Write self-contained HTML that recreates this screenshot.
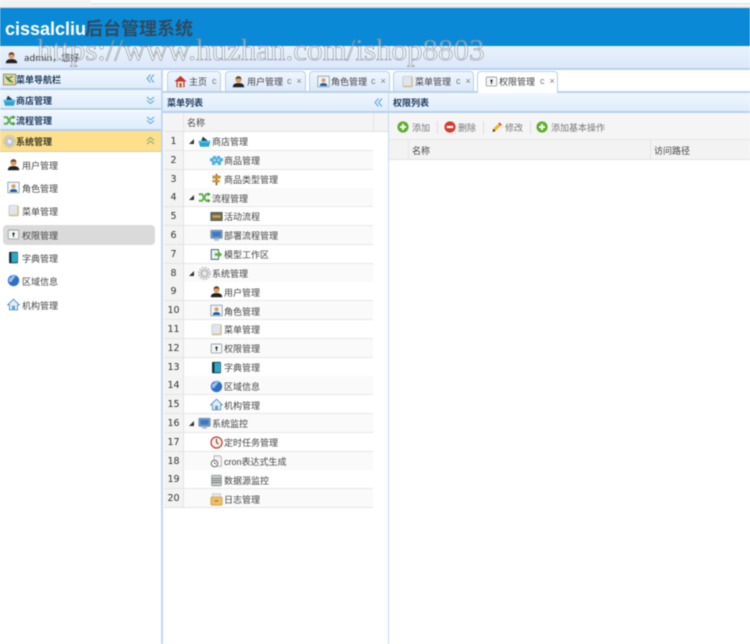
<!DOCTYPE html>
<html lang="zh"><head><meta charset="utf-8"><title>后台管理系统</title>
<style>
*{box-sizing:border-box}
html,body{margin:0;padding:0;background:#fff}
body{width:750px;height:644px;overflow:hidden;position:relative;font-family:"Liberation Sans","Noto Sans CJK SC",sans-serif;font-size:9px;color:#444}
#w{position:absolute;left:0;top:0;width:750px;height:644px;overflow:hidden;filter:blur(.4px)}
.a,.t,.i{position:absolute}
.t{white-space:nowrap;line-height:14px;height:14px;margin-top:2px}
.n+svg+.t,.n+.tri+svg+.t{margin-top:1px}
.b{font-weight:bold;color:#1f3b5c}
.i{width:13px;height:13px}
.hd{position:absolute;background:linear-gradient(#eff6fe,#dfecfb);border-bottom:2px solid #b8d0ec}
.r{position:absolute;left:164px;width:209px;height:19px;border-bottom:1px solid #e6e6e6}
.n{position:absolute;left:164px;width:20px;height:19px;background:#f3f3f3;border-right:1px solid #e2e2e2;border-bottom:1px solid #e4e4e4;text-align:center;font-family:"DejaVu Sans",sans-serif;font-size:9.5px;line-height:20px;color:#333}
.tab{position:absolute;top:71px;height:20px;border:1px solid #b7d0ea;border-bottom:0;border-radius:4px 4px 0 0;background:linear-gradient(#eff6fe,#dbe9f9)}
.c{position:absolute;font-size:9px;color:#777;line-height:14px;white-space:pre}
.ch{position:absolute;width:9px;height:9px}
.tri{position:absolute;width:0;height:0;border-left:5px solid transparent;border-bottom:5px solid #333}
</style></head><body>
<svg width="0" height="0" style="position:absolute"><defs>
<symbol id="dl" viewBox="0 0 9 9"><path d="M4.500 .5L1 4.500 4.500 8.500M8 .5L4.500 4.500 8 8.500" fill="none" stroke="#5aa3da" stroke-width="1"/></symbol>
<symbol id="dd" viewBox="0 0 9 9"><path d="M1 1l3.500 3L8 1M1 4.500l3.500 3 3.500-3" fill="none" stroke="#5aa3da" stroke-width="1"/></symbol>
<symbol id="du" viewBox="0 0 9 9"><path d="M1 4.500l3.500-3 3.500 3M1 8l3.500-3L8 8" fill="none" stroke="#7fa67a" stroke-width="1"/></symbol>
<symbol id="user" viewBox="0 0 16 16"><path d="M1 15c0-4 3-5 7-5s7 1 7 5z" fill="#222"/><circle cx="8" cy="6" r="3.700" fill="#d9a066"/><path d="M4.300 5.500C4.500 2.500 6 1.500 8 1.500s3.500 1 3.700 4C10 4 6 4 4.300 5.500z" fill="#6b4420"/></symbol>
<symbol id="role" viewBox="0 0 16 16"><rect x="1" y="1.500" width="14" height="13" fill="#f2f5f8" stroke="#8a9aa8"/><circle cx="8" cy="6.500" r="2.500" fill="#d9a066"/><path d="M3.500 13.500c0-3 2-3.500 4.500-3.500s4.500.5 4.500 3.500z" fill="#1c5ba8"/></symbol>
<symbol id="menu" viewBox="0 0 16 16"><rect x="2" y="1.500" width="12.500" height="13.500" rx="1.500" fill="#d9b878"/><rect x="2.500" y="1.500" width="10.500" height="12" rx="1" fill="#dfe5ea" stroke="#b9c2ca" stroke-width=".6"/></symbol>
<symbol id="perm" viewBox="0 0 16 16"><rect x="1.500" y="2.500" width="13" height="11" rx="1" fill="#f4f6f6" stroke="#8d9aa0"/><circle cx="8" cy="7" r="1.400" fill="#222"/><rect x="7.400" y="7" width="1.200" height="4" fill="#222"/></symbol>
<symbol id="dict" viewBox="0 0 16 16"><rect x="2.500" y="1" width="11" height="14" rx="1" fill="#1b2f3a"/><rect x="5.500" y="2" width="7.500" height="12" fill="#2ea7c9"/></symbol>
<symbol id="globe" viewBox="0 0 16 16"><circle cx="8" cy="8" r="7" fill="#2f6fc9"/><path d="M3 5c2-1 4-3 6-2 1 2-1 3-2 4s-1 3-3 3-2-3-1-5z" fill="#9cc3ea"/><path d="M4 2.500c3-1.500 6-1 8 1-3-1-5-1-8-1z" fill="#cfe4fa"/></symbol>
<symbol id="home" viewBox="0 0 16 16"><path d="M8 1.500L.8 8.500h2.200v6h10v-6h2.200z" fill="#e4eef6" stroke="#4e8fc4" stroke-width="1.100"/><rect x="6.200" y="9.500" width="3.600" height="5" fill="#5f9ed0"/></symbol>
<symbol id="homer" viewBox="0 0 16 16"><path d="M8 1L.5 8h2.500v7h10V8h2.500z" fill="#c9342a"/><rect x="4.500" y="8" width="7" height="7" fill="#f1e5cf"/><rect x="6.800" y="10" width="2.500" height="5" fill="#9a5a2e"/></symbol>
<symbol id="shop" viewBox="0 0 16 16"><path d="M1 8.500h14l-1.500 6h-11z" fill="#2aa3d6"/><rect x="0.500" y="7" width="15" height="2.500" rx="1" fill="#49bde8"/><path d="M4 7l2-5 6 5z" fill="#1f3b4c"/></symbol>
<symbol id="flow" viewBox="0 0 16 16"><path d="M1 4h4l5 8h3M1 12h4l5-8h3" fill="none" stroke="#5eb04f" stroke-width="2.400"/><path d="M12 1.500l3.500 2.500-3.500 2.500zM12 9.500l3.500 2.500-3.500 2.500z" fill="#3f8f36"/></symbol>
<symbol id="gear" viewBox="0 0 16 16"><circle cx="8" cy="8" r="7" fill="none" stroke="#b9bdc0" stroke-width="2" stroke-dasharray="2.200 1.500"/><circle cx="8" cy="8" r="5.600" fill="#bfc3c6"/><circle cx="8" cy="8" r="2.600" fill="#eceeef"/></symbol>
<symbol id="nav" viewBox="0 0 16 16"><rect x=".5" y="1.500" width="15" height="13" fill="#e8d9a0" stroke="#7d7d5a"/><path d="M3 4l9 8M12 4l-7 3 4 4" fill="none" stroke="#3c8a3f" stroke-width="1.500"/></symbol>
<symbol id="puzzle" viewBox="0 0 16 16"><path d="M0 5h3.500V2.500h4V5h1V2.500h4V5H16v4h-2.500v4.500h-4V11h-3v2.500h-4V9H0z" fill="#4bb0e0"/><circle cx="5.500" cy="7.500" r="1.200" fill="#dff1fb"/><circle cx="10.500" cy="7.500" r="1.200" fill="#dff1fb"/></symbol>
<symbol id="sign" viewBox="0 0 16 16"><rect x="7" y="1" width="2" height="14" fill="#8a5a1f"/><path d="M3 3h9l2 2-2 2H3zM4 8.500h8v3H4l-2-1.500z" fill="#c8963c"/></symbol>
<symbol id="act" viewBox="0 0 16 16"><rect x="1" y="3" width="14" height="10" fill="#6f6a55" stroke="#555"/><rect x="3" y="6.500" width="10" height="3" fill="#c8a93e"/></symbol>
<symbol id="mon" viewBox="0 0 16 16"><rect x="1" y="1.500" width="14" height="10" rx="1" fill="#6f9bd2" stroke="#7c8ea4"/><rect x="3" y="3.500" width="10" height="6" fill="#3f78c0"/><rect x="5" y="12" width="6" height="2.500" fill="#b7bdc4"/></symbol>
<symbol id="model" viewBox="0 0 16 16"><rect x="1.500" y="2" width="9" height="12" fill="#e8f0f4" stroke="#2a4a62"/><path d="M6 6.500h4V3.500l5 4.500-5 4.500v-3H6z" fill="#5cae3c"/></symbol>
<symbol id="clock" viewBox="0 0 16 16"><circle cx="8" cy="8" r="6.800" fill="#f7f3ea" stroke="#c23a2c" stroke-width="1.500"/><path d="M8 3.500V8l2.500 2" fill="none" stroke="#8a2a20" stroke-width="1.300"/></symbol>
<symbol id="cron" viewBox="0 0 16 16"><path d="M5 1h7l2 2v11H5z" fill="#f2f2f2" stroke="#a8a8a8"/><circle cx="5.500" cy="10.500" r="4" fill="#fff" stroke="#666" stroke-width="1.200"/><path d="M5.500 8.500v2h2" fill="none" stroke="#666"/></symbol>
<symbol id="db" viewBox="0 0 16 16"><rect x="2" y="1.500" width="12" height="13" rx="1.500" fill="#c4cac8" stroke="#8f9795"/><path d="M2 5.500h12M2 8h12M2 10.500h12" stroke="#6f7775"/></symbol>
<symbol id="log" viewBox="0 0 16 16"><rect x="3" y="1" width="10" height="6" fill="#e6e9ec" stroke="#aaa" stroke-width=".6"/><rect x="1" y="5" width="14" height="10" rx="1.500" fill="#efbd62" stroke="#c69436" stroke-width=".7"/><rect x="6" y="9" width="4" height="1.300" fill="#8a6a2a"/></symbol>
<symbol id="plus" viewBox="0 0 12 12"><circle cx="6" cy="6" r="5.600" fill="#5fae2c"/><path d="M6 3v6M3 6h6" stroke="#fff" stroke-width="2"/></symbol>
<symbol id="minus" viewBox="0 0 12 12"><circle cx="6" cy="6" r="5.600" fill="#d63b2f"/><path d="M2.800 6h6.400" stroke="#fff" stroke-width="2.200"/></symbol>
<symbol id="pen" viewBox="0 0 12 12"><path d="M1.500 11l.8-3.200L8.500 1.500l2.200 2.200-6.300 6.300z" fill="#f2b32e"/><path d="M7.500 2.500l2.200 2.200 1-1-2.200-2.200z" fill="#c9342a"/><path d="M1.500 11l.8-3.200 2.200 2.200z" fill="#333"/></symbol>
</defs></svg>
<div id="w">
<!-- browser strip -->
<div class="a" style="left:0;top:0;width:750px;height:8px;background:#f2f2f2;border-bottom:1px solid #d8d8d8"></div>
<div class="a" style="left:91px;top:0;width:660px;height:4px;background:#fff;border-bottom:1px solid #ddd"></div>
<!-- header -->
<div class="a" style="left:0;top:8px;width:750px;height:38px;background:#0a8ad6"></div>
<div class="a" style="left:0;top:46px;width:750px;height:22px;background:linear-gradient(#e9f2fd,#dbe8f9)"></div>
<div class="a" style="left:0;top:68px;width:750px;height:2px;background:#b9d2ee"></div>
<div class="t" style="left:5px;top:17px;margin-top:0;height:24px;line-height:24px;font-size:18px;font-weight:bold;color:#fff">cissalcliu</div>
<div class="t" style="left:85px;top:17px;margin-top:0;height:24px;line-height:24px;font-size:18px;font-weight:bold;color:#2f4b63">后台管理系统</div>
<svg class="i" style="left:5px;top:51px"><use href="#user"/></svg>
<div class="t" style="left:24px;top:50px;font-family:'DejaVu Sans','Noto Sans CJK SC',sans-serif;font-size:9px;color:#333">admin，您好</div>
<div class="t" style="left:37px;top:34px;margin-top:0;height:32px;line-height:32px;font-family:'Liberation Serif',serif;font-size:31px;color:rgba(255,255,255,.35);-webkit-text-stroke:.6px rgba(120,120,120,.8)">https://www.huzhan.com/ishop8803</div>

<!-- left accordion -->
<div class="hd" style="left:0;top:70px;width:161px;height:20px"></div>
<svg class="i" style="left:3px;top:73px"><use href="#nav"/></svg>
<div class="t b" style="left:16px;top:71px">菜单导航栏</div>
<svg class="ch" style="left:146px;top:74px"><use href="#dl"/></svg>
<div class="hd" style="left:0;top:90px;width:161px;height:20px"></div>
<svg class="i" style="left:3px;top:94px"><use href="#shop"/></svg>
<div class="t b" style="left:16px;top:92px">商店管理</div>
<svg class="ch" style="left:146px;top:96px"><use href="#dd"/></svg>
<div class="hd" style="left:0;top:111px;width:161px;height:20px"></div>
<svg class="i" style="left:3px;top:114px"><use href="#flow"/></svg>
<div class="t b" style="left:16px;top:112px">流程管理</div>
<svg class="ch" style="left:146px;top:116px"><use href="#dd"/></svg>
<div class="a" style="left:0;top:131px;width:161px;height:21px;background:#fddf8c;border-bottom:1px solid #c9d2b8"></div>
<svg class="i" style="left:3px;top:135px"><use href="#gear"/></svg>
<div class="t b" style="left:16px;top:133px;color:#3a3a2a">系统管理</div>
<svg class="ch" style="left:146px;top:136px"><use href="#du"/></svg>

<div class="a" style="left:3px;top:225px;width:152px;height:20px;background:#dadada;border-radius:4px"></div>
<svg class="i" style="left:7px;top:158px"><use href="#user"/></svg><div class="t" style="left:22px;top:157px">用户管理</div>
<svg class="i" style="left:7px;top:181px"><use href="#role"/></svg><div class="t" style="left:22px;top:180px">角色管理</div>
<svg class="i" style="left:7px;top:204px"><use href="#menu"/></svg><div class="t" style="left:22px;top:203px">菜单管理</div>
<svg class="i" style="left:7px;top:228px"><use href="#perm"/></svg><div class="t" style="left:22px;top:227px">权限管理</div>
<svg class="i" style="left:7px;top:251px"><use href="#dict"/></svg><div class="t" style="left:22px;top:250px">字典管理</div>
<svg class="i" style="left:7px;top:274px"><use href="#globe"/></svg><div class="t" style="left:22px;top:273px">区域信息</div>
<svg class="i" style="left:7px;top:298px"><use href="#home"/></svg><div class="t" style="left:22px;top:297px">机构管理</div>

<div class="a" style="left:161px;top:68px;width:2px;height:576px;background:#c2d8f0"></div>

<!-- tabs -->
<div class="a" style="left:163px;top:91px;width:587px;height:2px;background:#b9d2ee"></div>
<div class="tab" style="left:167px;width:54px"></div>
<svg class="i" style="left:174px;top:75px"><use href="#homer"/></svg><div class="t" style="left:189px;top:73px">主页</div><div class="c" style="left:212px;top:74px">c</div>
<div class="tab" style="left:225px;width:81px"></div>
<svg class="i" style="left:232px;top:75px"><use href="#user"/></svg><div class="t" style="left:247px;top:73px">用户管理</div><div class="c" style="left:287px;top:74px">c  ×</div>
<div class="tab" style="left:309px;width:81px"></div>
<svg class="i" style="left:317px;top:75px"><use href="#role"/></svg><div class="t" style="left:331px;top:73px">角色管理</div><div class="c" style="left:371px;top:74px">c  ×</div>
<div class="tab" style="left:393px;width:81px"></div>
<svg class="i" style="left:401px;top:75px"><use href="#menu"/></svg><div class="t" style="left:415px;top:73px">菜单管理</div><div class="c" style="left:456px;top:74px">c  ×</div>
<div class="tab" style="left:477px;width:81px;height:23px;background:#fff"></div>
<svg class="i" style="left:485px;top:75px"><use href="#perm"/></svg><div class="t" style="left:499px;top:73px">权限管理</div><div class="c" style="left:540px;top:74px">c  ×</div>

<!-- panel headers -->
<div class="hd" style="left:163px;top:93px;width:225px;height:20px"></div>
<div class="t b" style="left:167px;top:94px">菜单列表</div>
<svg class="ch" style="left:374px;top:98px"><use href="#dl"/></svg>
<div class="hd" style="left:389px;top:93px;width:361px;height:20px"></div>
<div class="t b" style="left:393px;top:94px">权限列表</div>
<div class="a" style="left:388px;top:93px;width:1px;height:551px;background:#c7daf0"></div>

<!-- left grid header -->
<div class="a" style="left:164px;top:113px;width:224px;height:19px;background:#f4f4f4;border-bottom:1px solid #e2e2e2"></div>
<div class="a" style="left:183px;top:113px;width:1px;height:19px;background:#e4e4e4"></div>
<div class="a" style="left:373px;top:113px;width:1px;height:19px;background:#e4e4e4"></div>
<div class="t" style="left:187px;top:114px">名称</div>

<!-- rows -->
<div class="r" style="top:132px;background:#fff"></div><div class="n" style="top:132px">1</div><div class="tri" style="left:189px;top:139px"></div><svg class="i" style="left:198px;top:135px"><use href="#shop"/></svg><div class="t" style="left:212px;top:134px">商店管理</div>
<div class="r" style="top:151px;background:#fafafa"></div><div class="n" style="top:151px">2</div><svg class="i" style="left:210px;top:154px"><use href="#puzzle"/></svg><div class="t" style="left:224px;top:153px">商品管理</div>
<div class="r" style="top:170px;background:#fff"></div><div class="n" style="top:170px">3</div><svg class="i" style="left:210px;top:173px"><use href="#sign"/></svg><div class="t" style="left:224px;top:172px">商品类型管理</div>
<div class="r" style="top:188px;background:#fafafa"></div><div class="n" style="top:188px">4</div><div class="tri" style="left:189px;top:195px"></div><svg class="i" style="left:198px;top:191px"><use href="#flow"/></svg><div class="t" style="left:212px;top:191px">流程管理</div>
<div class="r" style="top:207px;background:#fff"></div><div class="n" style="top:207px">5</div><svg class="i" style="left:210px;top:210px"><use href="#act"/></svg><div class="t" style="left:224px;top:209px">活动流程</div>
<div class="r" style="top:226px;background:#fafafa"></div><div class="n" style="top:226px">6</div><svg class="i" style="left:210px;top:229px"><use href="#mon"/></svg><div class="t" style="left:224px;top:228px">部署流程管理</div>
<div class="r" style="top:245px;background:#fff"></div><div class="n" style="top:245px">7</div><svg class="i" style="left:210px;top:248px"><use href="#model"/></svg><div class="t" style="left:224px;top:247px">模型工作区</div>
<div class="r" style="top:264px;background:#fafafa"></div><div class="n" style="top:264px">8</div><div class="tri" style="left:189px;top:271px"></div><svg class="i" style="left:198px;top:267px"><use href="#gear"/></svg><div class="t" style="left:212px;top:266px">系统管理</div>
<div class="r" style="top:282px;background:#fff"></div><div class="n" style="top:282px">9</div><svg class="i" style="left:210px;top:285px"><use href="#user"/></svg><div class="t" style="left:224px;top:285px">用户管理</div>
<div class="r" style="top:301px;background:#fafafa"></div><div class="n" style="top:301px">10</div><svg class="i" style="left:210px;top:304px"><use href="#role"/></svg><div class="t" style="left:224px;top:304px">角色管理</div>
<div class="r" style="top:320px;background:#fff"></div><div class="n" style="top:320px">11</div><svg class="i" style="left:210px;top:323px"><use href="#menu"/></svg><div class="t" style="left:224px;top:322px">菜单管理</div>
<div class="r" style="top:339px;background:#fafafa"></div><div class="n" style="top:339px">12</div><svg class="i" style="left:210px;top:342px"><use href="#perm"/></svg><div class="t" style="left:224px;top:341px">权限管理</div>
<div class="r" style="top:358px;background:#fff"></div><div class="n" style="top:358px">13</div><svg class="i" style="left:210px;top:361px"><use href="#dict"/></svg><div class="t" style="left:224px;top:360px">字典管理</div>
<div class="r" style="top:376px;background:#fafafa"></div><div class="n" style="top:376px">14</div><svg class="i" style="left:210px;top:380px"><use href="#globe"/></svg><div class="t" style="left:224px;top:379px">区域信息</div>
<div class="r" style="top:395px;background:#fff"></div><div class="n" style="top:395px">15</div><svg class="i" style="left:210px;top:398px"><use href="#home"/></svg><div class="t" style="left:224px;top:398px">机构管理</div>
<div class="r" style="top:414px;background:#fafafa"></div><div class="n" style="top:414px">16</div><div class="tri" style="left:189px;top:421px"></div><svg class="i" style="left:198px;top:417px"><use href="#mon"/></svg><div class="t" style="left:212px;top:416px">系统监控</div>
<div class="r" style="top:433px;background:#fff"></div><div class="n" style="top:433px">17</div><svg class="i" style="left:210px;top:436px"><use href="#clock"/></svg><div class="t" style="left:224px;top:435px">定时任务管理</div>
<div class="r" style="top:452px;background:#fafafa"></div><div class="n" style="top:452px">18</div><svg class="i" style="left:210px;top:455px"><use href="#cron"/></svg><div class="t" style="left:224px;top:454px">cron表达式生成</div>
<div class="r" style="top:470px;background:#fff"></div><div class="n" style="top:470px">19</div><svg class="i" style="left:210px;top:474px"><use href="#db"/></svg><div class="t" style="left:224px;top:473px">数据源监控</div>
<div class="r" style="top:489px;background:#fafafa;height:19px"></div><div class="n" style="top:489px">20</div><svg class="i" style="left:210px;top:493px"><use href="#log"/></svg><div class="t" style="left:224px;top:492px">日志管理</div>

<!-- toolbar -->
<div class="a" style="left:389px;top:113px;width:361px;height:27px;background:#f5f5f5;border-bottom:1px solid #e6e6e6"></div>
<svg class="a" style="left:397px;top:121px;width:12px;height:12px"><use href="#plus"/></svg><div class="t" style="left:412px;top:119px;color:#777">添加</div>
<div class="a" style="left:437px;top:121px;width:1px;height:13px;background:#ddd"></div>
<svg class="a" style="left:444px;top:121px;width:12px;height:12px"><use href="#minus"/></svg><div class="t" style="left:458px;top:119px;color:#777">删除</div>
<div class="a" style="left:483px;top:121px;width:1px;height:13px;background:#ddd"></div>
<svg class="a" style="left:491px;top:121px;width:12px;height:12px"><use href="#pen"/></svg><div class="t" style="left:505px;top:119px;color:#777">修改</div>
<div class="a" style="left:530px;top:121px;width:1px;height:13px;background:#ddd"></div>
<svg class="a" style="left:536px;top:121px;width:12px;height:12px"><use href="#plus"/></svg><div class="t" style="left:551px;top:119px;color:#777">添加基本操作</div>

<!-- right grid header -->
<div class="a" style="left:389px;top:140px;width:361px;height:20px;background:#f3f3f3;border-bottom:1px solid #e2e2e2"></div>
<div class="a" style="left:408px;top:140px;width:1px;height:20px;background:#e8e8e8"></div>
<div class="a" style="left:650px;top:140px;width:1px;height:20px;background:#e4e4e4"></div>
<div class="t" style="left:412px;top:142px">名称</div>
<div class="t" style="left:654px;top:142px">访问路径</div>
</div>
</body></html>
